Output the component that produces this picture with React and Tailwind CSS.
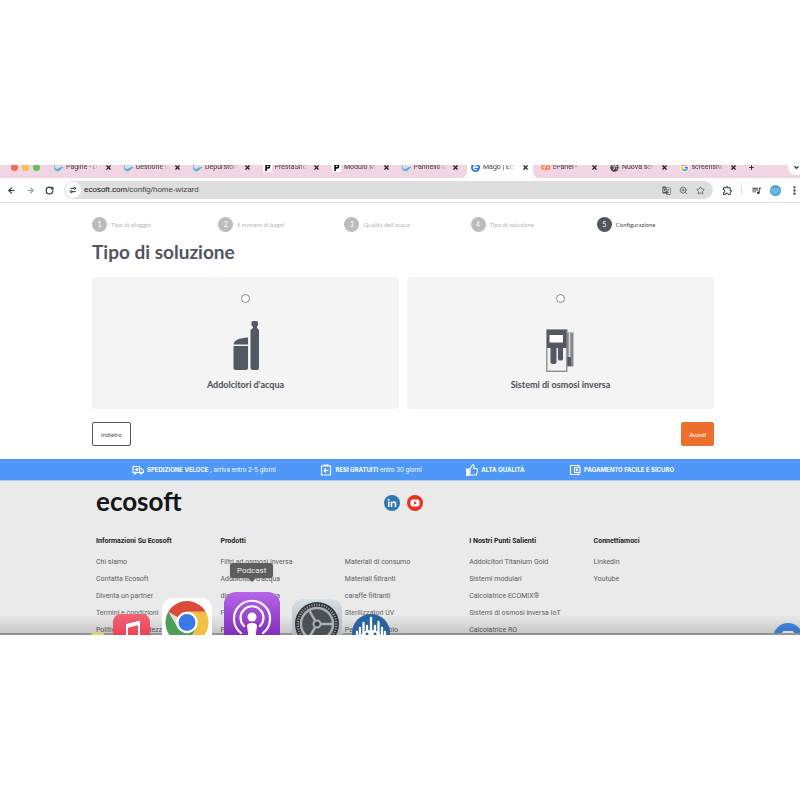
import React from "react";
import { ArrowLeft, ArrowRight, RotateCw, Settings2, Star, ZoomIn, MoreVertical, X, Plus, ChevronDown } from "lucide-react";
import { MdGTranslate, MdOutlineExtension, MdQueueMusic } from "react-icons/md";

const tabs = [
  { title: "Pagine - D", icon: "swoosh" },
  { title: "Gestione n", icon: "swoosh" },
  { title: "Depurstore", icon: "swoosh" },
  { title: "PrestaShop", icon: "presta" },
  { title: "Modulo Mo", icon: "presta" },
  { title: "Pannello d", icon: "swoosh" },
  { title: "Mago | Eco", icon: "eco", active: true },
  { title: "cPanel - ", icon: "cpanel" },
  { title: "Nuova sch", icon: "globe" },
  { title: "screensho", icon: "google" },
];

const steps = ["Tipo di alloggio", "Il numero di bagni", "Qualità dell'acqua", "Tipo di soluzione", "Configurazione"];

const columns = [
  { title: "Informazioni Su Ecosoft", links: ["Chi siamo", "Contatta Ecosoft", "Diventa un partner", "Termini e condizioni", "Politica di riservatezza"] },
  { title: "Prodotti", links: ["Filtri ad osmosi inversa", "Addolcitori d'acqua", "distributori d'acqua", "Filtri", "Pompe"] },
  { title: "", links: ["Materiali di consumo", "Materiali filtranti", "caraffe filtranti", "Sterilizzatori UV", "Pezzi di ricambio"] },
  { title: "I Nostri Punti Salienti", links: ["Addolcitori Titanium Gold", "Sistemi modulari", "Calcolatrice ECOMIX®", "Sistemi di osmosi inversa IoT", "Calcolatrice RO"] },
  { title: "Connettiamoci", links: ["Linkedin", "Youtube"] },
];

function Favicon({ kind }) {
  const common = { viewBox: "0 0 16 16", className: "size-[9px] shrink-0", "aria-hidden": true };
  if (kind === "swoosh")
    return (
      <svg {...common}>
        <path d="M0 3c0 9 5 9 8 7 3-1 4-3 8-2-3 1-4 3-6 5-5 3-11 0-10-10Z" fill="#35b8ea" stroke="#35b8ea" />
      </svg>
    );
  if (kind === "presta")
    return (
      <svg {...common}>
        <rect width="16" height="16" fill="#fff" />
        <path d="M4 2h5a4 4 0 0 1 0 8H7v4H4Zm3 3v2h2a1 1 0 0 0 0-2Z" fill="#111" />
      </svg>
    );
  if (kind === "eco")
    return (
      <svg {...common}>
        <circle cx="8" cy="8" r="8" fill="#3478ea" />
        <path d="M4.500 8h7a3.500 3.500 0 1 0-1 2.800" fill="none" stroke="#fff" strokeWidth="2" />
      </svg>
    );
  if (kind === "cpanel")
    return (
      <svg {...common}>
        <path d="M7 5H4.500a3 3 0 0 0 0 6H6M8 13l2-8h2.500a3 3 0 0 1 0 6H10" fill="none" stroke="#ff6c2c" strokeWidth="2.400" />
      </svg>
    );
  if (kind === "globe")
    return (
      <svg {...common}>
        <circle cx="8" cy="8" r="7.500" fill="#444" />
        <path d="M3 5l4 1 1 3-2 3M10 2l-1 3 4 2M11 10l2 1" stroke="#f2d5e2" strokeWidth="1.800" fill="none" />
      </svg>
    );
  return (
    <svg {...common}>
      <circle cx="8" cy="8" r="8" fill="#fff" />
      <g fill="none" strokeWidth="2.500">
        <path d="M12 4.500A5 5 0 0 0 4 5" stroke="#ea4335" />
        <path d="M4 5a5 5 0 0 0 0 6" stroke="#fbbc05" />
        <path d="M4 11a5 5 0 0 0 7.500.8" stroke="#34a853" />
        <path d="M11.500 11.800A5 5 0 0 0 13 8H8" stroke="#4285f4" />
      </g>
    </svg>
  );
}

function TabStrip() {
  return (
    <div className="flex h-[13px] bg-white text-[7px] text-[#4b3f45]">
      <div className="flex w-[50px] shrink-0 items-center gap-1 bg-[#f1d5e2] pb-[9px] pl-[11px]">
        <span className="size-[7px] shrink-0 rounded-full bg-[#ed6a5e]" />
        <span className="size-[7px] shrink-0 rounded-full bg-[#f4bf4f]" />
        <span className="size-[7px] shrink-0 rounded-full bg-[#61c554]" />
      </div>
      {tabs.map((tab, i) => (
        <div
          key={tab.title}
          className={
            "flex min-w-0 flex-1 items-center gap-[3px] pb-[9px] pr-2 " +
            (tab.active ? "bg-white" : "bg-[#f1d5e2]") +
            (i === 5 ? " rounded-br-md" : "") +
            (i === 7 ? " -ml-1 rounded-bl-md pl-2" : " pl-1")
          }
        >
          <Favicon kind={tab.icon} />
          <span className="w-8 overflow-hidden whitespace-nowrap bg-linear-to-r from-[#3c3338] from-75% to-transparent bg-clip-text leading-[10px] text-transparent">{tab.title}</span>
          <button aria-label={"Chiudi " + tab.title} className="ml-auto"><X className="size-[7px] text-[#222]" strokeWidth={4} /></button>
        </div>
      ))}
      <div className="flex w-[55px] shrink-0 items-center justify-between bg-[#f1d5e2] pb-[9px] pl-[3px]">
        <button aria-label="Nuova scheda"><Plus className="size-[7px] text-[#222]" strokeWidth={3} /></button>
        <button aria-label="Cerca schede" className="-mr-1 flex size-4 items-center justify-center rounded-full bg-white"><ChevronDown className="size-[7px] text-[#222]" strokeWidth={4} /></button>
      </div>
    </div>
  );
}

function Toolbar() {
  return (
    <div className="flex h-[25px] items-center border-b border-[#dcdcdc] bg-white pl-[7px] text-[#333]">
      <div className="flex w-[57px] shrink-0 items-center gap-[10px]">
        <button aria-label="Indietro nella cronologia"><ArrowLeft className="size-[9px]" strokeWidth={3} /></button>
        <button aria-label="Avanti nella cronologia"><ArrowRight className="size-[9px] text-[#999]" strokeWidth={3} /></button>
        <button aria-label="Ricarica"><RotateCw className="size-[9px]" strokeWidth={3} /></button>
      </div>
      <div className="flex h-[18px] flex-1 items-center rounded-full bg-[#dedede] pl-px pr-2">
        <span className="flex size-4 items-center justify-center rounded-full bg-white"><Settings2 className="size-2 -scale-y-100" strokeWidth={3} /></span>
        <p className="flex-1 pl-[3px] font-['Liberation_Sans',sans-serif] text-[8px] text-[#444]"><span className="text-[#111]">ecosoft.com</span>/config/home-wizard</p>
        <div className="flex gap-2 text-[#555]">
          <MdGTranslate className="size-[9px]" />
          <ZoomIn className="size-[9px]" />
          <Star className="size-[9px]" />
        </div>
      </div>
      <div className="flex w-[87px] shrink-0 items-center justify-between pl-[9px]">
        <MdOutlineExtension className="size-[11px]" />
        <span className="h-2 w-px bg-[#f1c9da]" />
        <MdQueueMusic className="size-[11px]" />
        <svg viewBox="0 0 22 22" className="size-[11px]" aria-hidden="true">
          <circle cx="11" cy="11" r="11" fill="#4ba3d3" />
          <path d="M3 8h16M2 12h18M5 16h12" stroke="#a5d5ee" strokeWidth="2" strokeDasharray="3 1" />
        </svg>
        <MoreVertical className="size-[11px]" strokeWidth={3} />
      </div>
    </div>
  );
}

function SoftenerIcon() {
  return (
    <svg viewBox="0 0 26 50" className="h-[50px] w-[26px]" fill="#535963" aria-hidden="true">
      <path d="M.5 23.500C1 19 6 17 15 16.500v7Z" />
      <path d="M.5 25H15v22q0 2-2 2H2.500q-2 0-2-2Z" />
      <rect x="18.500" y="0" width="6.500" height="5.500" rx="1.500" />
      <path d="M20 5h4v2l2 2v38q0 2-2 2h-4q-2.500 0-2.500-2V9L20 7Z" />
    </svg>
  );
}

function OsmosisIcon() {
  return (
    <svg viewBox="1 -2 28 44" className="h-[44px] w-[28px] overflow-visible" aria-hidden="true">
      <rect x="21" y="3.500" width="6.500" height="34" fill="#85898f" />
      <path d="M23.500 4v24" stroke="#ddd" strokeWidth="1.500" />
      <path d="M21 28h4v9h-4Z" fill="#535963" />
      <rect x=".8" y=".8" width="20" height="41.500" fill="#f1f1f1" stroke="#85898f" strokeWidth="1.300" />
      <path d="M1 1h19.500v18H17v11q0 1.500-2.500 1.500T12 30V19h-1.500v14q0 2-3 2t-3-2V19H1Z" fill="#535963" />
      <rect x="3.500" y="6" width="13.500" height="7.500" fill="#fff" />
    </svg>
  );
}

function Option({ id, label, children }) {
  return (
    <label htmlFor={id} className="flex h-[132px] flex-col items-center rounded bg-[#f4f4f4] pb-[18px] pt-[17px]">
      <input id={id} type="radio" name="soluzione" className="size-[9px] appearance-none rounded-full border border-[#888] bg-white" />
      <span className="flex flex-1 items-end pb-2">{children}</span>
      <span className="text-[9px] font-bold leading-3 text-[#484d57]">{label}</span>
    </label>
  );
}

function Benefits() {
  const icon = { viewBox: "0 0 24 24", className: "size-3 shrink-0", fill: "none", stroke: "currentColor", strokeWidth: 2.2, "aria-hidden": true };
  return (
    <div className="flex h-[22px] items-center justify-between border-b border-[#a9cbf5] bg-[#4f98f8] pl-[132px] pr-[126px] font-[Inter,sans-serif] text-[6px] text-white">
      <p className="flex items-center gap-[3px]">
        <svg {...icon}><path d="M2 5h13v12H2ZM15 9h4l4 4v4h-8M5 11h6M9 8l3 3-3 3" /><circle cx="6" cy="18" r="2" fill="#4f98f8" /><circle cx="18" cy="18" r="2" fill="#4f98f8" /></svg>
        <span><b>SPEDIZIONE VELOCE</b> , arriva entro 2-5 giorni</span>
      </p>
      <p className="flex items-center gap-[3px]">
        <svg {...icon}><path d="M3 4h18v18H3ZM8 4V2h8v2M17 13H8M12 9l-4 4 4 4" /></svg>
        <span><b>RESI GRATUITI</b> entro 30 giorni</span>
      </p>
      <p className="flex items-center gap-[3px]">
        <svg {...icon}><path d="M1 10h5v13H1Z" fill="currentColor" /><path d="M8 10l5-8c4-1 4 2 2 7h7l1 4-2 9H8Z" /></svg>
        <b>ALTA QUALITÀ</b>
      </p>
      <p className="flex items-center gap-[3px]">
        <svg {...icon}><path d="M20 7V3H3v18h17v-4M11 7h11v10H11Z" /><circle cx="16" cy="12" r="1.500" /></svg>
        <b>PAGAMENTO FACILE E SICURO</b>
      </p>
    </div>
  );
}

function Footer() {
  return (
    <footer className="-mb-1 bg-[#eaeaea] pl-24 pr-[82px] pt-[6px]">
      <div className="grid grid-cols-[288px_1fr] items-center">
        <a href="#home" className="text-[26px] font-bold leading-[28px] text-[#161616]">ecosoft</a>
        <div className="flex gap-[7px] pt-1">
          <a href="#linkedin" aria-label="Linkedin">
            <svg viewBox="0 0 32 32" className="size-4"><circle cx="16" cy="16" r="16" fill="#2f78b5" /><g fill="#fff"><circle cx="9.500" cy="9.500" r="2" /><path d="M8 13h3v11H8ZM13.500 13h3v1.500c2-3 8-2.500 8 3V24h-3v-6c0-3.500-5-3.500-5 0v6h-3Z" /></g></svg>
          </a>
          <a href="#youtube" aria-label="Youtube">
            <svg viewBox="0 0 32 32" className="size-4"><circle cx="16" cy="16" r="16" fill="#ec3023" /><rect x="7" y="9" width="18" height="14" rx="4" fill="#fff" /><path d="m14 12.500 6 3.500-6 3.500Z" fill="#ec3023" /></svg>
          </a>
        </div>
      </div>
      <div className="grid grid-cols-5 pt-5 font-[Roboto,sans-serif]">
        {columns.map((col) => (
          <div key={col.title} className="min-w-0 whitespace-nowrap text-[7px] text-[#606060]">
            <h2 className="h-3 font-bold leading-3 text-[#222]">{col.title}</h2>
            <ul className="pt-[7px] leading-[17px]">
              {col.links.map((link) => (
                <li key={link}><a href="#footer">{link}</a></li>
              ))}
            </ul>
          </div>
        ))}
      </div>
    </footer>
  );
}

const teeth = Array.from({ length: 48 }, (_, i) => i * 7.5);

function Dock() {
  return (
    <>
      <div className="pointer-events-none absolute inset-x-0 bottom-0 h-5 border-b-2 border-[#949494] bg-linear-to-b from-transparent to-black/15" />
      <div className="absolute bottom-0 left-[91px] h-0.5 w-[13px] rounded-t-sm bg-[#f0d84a]" />
      <div className="absolute bottom-0 left-[113px] flex items-end gap-3">
        <div className="h-[21px] w-[37px] overflow-hidden">
          <svg viewBox="0 0 37 37" className="size-[37px]">
            <defs><linearGradient id="music" x2="0" y2="1"><stop stopColor="#ef6675" /><stop offset="1" stopColor="#e8283e" /></linearGradient></defs>
            <rect width="37" height="37" rx="8" fill="url(#music)" />
            <path d="M14 27V11l12-3v16" fill="none" stroke="#fff" strokeWidth="2" />
            <path d="M14 10l12-3v4l-12 3Z" fill="#fff" />
            <ellipse cx="12" cy="27" rx="3" ry="2.500" fill="#fff" /><ellipse cx="24" cy="24" rx="3" ry="2.500" fill="#fff" />
          </svg>
        </div>
        <div className="h-[37px] w-[50px] overflow-hidden">
          <svg viewBox="0 0 50 50" className="size-[50px]">
            <rect width="50" height="50" rx="11" fill="#fff" />
            <circle cx="25" cy="24.500" r="21.500" fill="#ddd" />
            <path d="M25 24.500 6.400 13.800A21.500 21.500 0 0 1 43.600 13.800H25Z" fill="#d94a39" />
            <path d="M25 13.800h18.600A21.500 21.500 0 0 1 25 46l9.300-16.200Z" fill="#f2c043" />
            <path d="M6.400 13.800A21.500 21.500 0 0 0 25 46l9.300-16.200H15.700Z" fill="#4c9f55" />
            <circle cx="25" cy="24.500" r="10.700" fill="#fff" /><circle cx="25" cy="24.500" r="8.500" fill="#3b78e7" />
          </svg>
        </div>
        <div className="h-[43px] w-14 overflow-hidden">
          <svg viewBox="0 0 56 56" className="size-14">
            <defs><linearGradient id="podcast" x2="0" y2="1"><stop stopColor="#b866e8" /><stop offset="1" stopColor="#701db0" /></linearGradient></defs>
            <rect width="56" height="56" rx="12" fill="url(#podcast)" />
            <g fill="none" stroke="#fff" strokeWidth="2.200" strokeLinecap="round">
              <path d="M17 41a18 18 0 1 1 22 0" /><path d="M20 34a11.500 11.500 0 1 1 16 0" />
            </g>
            <circle cx="28" cy="25" r="4.500" fill="#fff" /><path d="M23 34q0-3 5-3t5 3l-2 14q-3 3-6 0Z" fill="#fff" />
          </svg>
        </div>
        <div className="h-[36px] w-[50px] overflow-hidden">
          <svg viewBox="0 0 50 50" className="size-[50px]">
            <defs><linearGradient id="settings" x2="0" y2="1"><stop stopColor="#d5e0e6" /><stop offset="1" stopColor="#9ca6ad" /></linearGradient></defs>
            <rect width="50" height="50" rx="11" fill="url(#settings)" />
            <circle cx="25" cy="25" r="22" fill="#303437" />
            <g stroke="#a1a7ab" strokeWidth="1">
              {teeth.map((a) => <path key={a} d="M25 4.500v2.500" transform={`rotate(${a} 25 25)`} />)}
            </g>
            <circle cx="25" cy="25" r="16" fill="#4a5054" stroke="#a9afb3" strokeWidth="2.500" />
            <path d="M25 25h16M25 25 17 11M25 25l-8 14" stroke="#a9afb3" strokeWidth="2.500" />
            <circle cx="25" cy="25" r="3.500" fill="#3c4145" stroke="#a9afb3" strokeWidth="2" />
          </svg>
        </div>
        <div className="-ml-0.5 h-[21px] w-[38px] overflow-hidden">
          <svg viewBox="0 0 38 38" className="size-[38px]">
            <circle cx="19" cy="19" r="19" fill="#2863a3" />
            <path d="M5 18v4M8 14v10M11.500 9v13M15 12v9M19 4v15M23 12v9M26.500 8v14M30 14v10M33 18v4" stroke="#fff" strokeWidth="2.300" strokeLinecap="round" />
            <path d="M8 24q2-8 11-8t11 8Z" fill="#fff" /><circle cx="15" cy="20" r="1.500" fill="#2863a3" /><circle cx="23" cy="20" r="1.500" fill="#2863a3" />
          </svg>
        </div>
      </div>
      <div role="tooltip" className="absolute bottom-[57px] left-[230px] rounded-[3px] bg-[#5d5d5d] px-[7px] font-[Roboto,sans-serif] text-[8px] leading-[15px] text-[#eee] shadow-sm">
        Podcast
        <span className="absolute left-1/2 top-full -translate-x-1/2 border-x-4 border-t-4 border-x-transparent border-t-[#5d5d5d]" />
      </div>
    </>
  );
}

export default function App() {
  return (
    <div className="min-h-screen bg-white py-[165px] font-[Lato,sans-serif]">
      <div className="relative overflow-hidden">
        <div className="font-[Roboto,sans-serif]">
          <TabStrip />
          <Toolbar />
        </div>
        <main>
          <ol className="grid grid-cols-5 pl-[92px] pr-[77px] pt-[14px]">
            {steps.map((step, i) => (
              <li key={step} className={"flex items-center gap-1 text-[6px] " + (i === 4 ? "text-[#484d57]" : "text-[#b4b6ba]")}>
                <span className={"flex size-[15px] items-center justify-center rounded-full text-[7px] text-white " + (i === 4 ? "bg-[#50555f]" : "bg-[#bbbcc0]")}>{i + 1}</span>
                {step}
              </li>
            ))}
          </ol>
          <div className="pl-[92px] pr-[86px]">
            <h1 className="pb-[13px] pt-[7px] text-[19px] font-bold leading-[25px] text-[#50555f]">Tipo di soluzione</h1>
            <div className="grid grid-cols-2 gap-2">
              <Option id="addolcitori" label="Addolcitori d'acqua"><SoftenerIcon /></Option>
              <Option id="osmosi" label="Sistemi di osmosi inversa"><OsmosisIcon /></Option>
            </div>
            <div className="flex justify-between pb-[13px] pt-[13px] text-[6px]">
              <button className="h-6 rounded-xs border border-[#50555f] px-2 text-[#484d57]">Indietro</button>
              <button className="h-6 rounded-xs bg-[#ed6f2d] px-2 text-white">Avanti</button>
            </div>
          </div>
        </main>
        <Benefits />
        <Footer />
        <button aria-label="Apri chat" className="absolute -bottom-[18px] -right-[3px] flex size-[30px] justify-center rounded-full bg-[#438be9] pt-2">
          <span className="h-3 w-3 rounded-xs bg-white" />
        </button>
        <Dock />
      </div>
    </div>
  );
}
